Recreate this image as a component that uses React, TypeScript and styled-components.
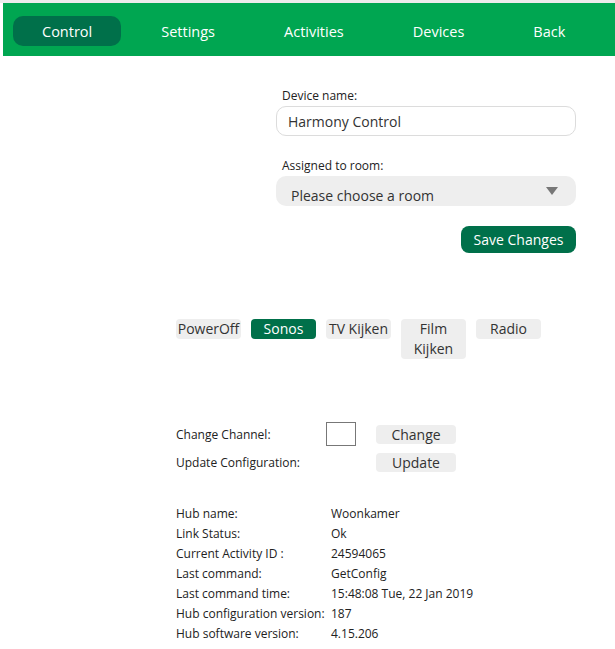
import styled, { createGlobalStyle } from 'styled-components'

const GlobalStyle = createGlobalStyle`
  html, body {
    margin: 0;
    padding: 0;
    background: #fff;
  }
  body {
    font-family: "Open Sans", "Noto Sans", sans-serif;
    color: #222;
    border-top: 3px solid #ececec;
  }
`

const green = '#00a651'
const darkGreen = '#00704a'

const Nav = styled.nav`
  display: flex;
  gap: 11px;
  margin-left: 3px;
  height: 53px;
  box-sizing: border-box;
  padding: 13px 10px 0;
  background: ${green};
`

const NavItem = styled.a<{ $active?: boolean }>`
  height: 30px;
  padding: 0 29px;
  border-radius: 10px;
  font-size: 14.5px;
  line-height: 31px;
  color: #fff;
  text-decoration: none;
  background: ${p => (p.$active ? darkGreen : 'transparent')};
  cursor: pointer;
`

const Content = styled.main`
  margin-left: 176px;
  width: 400px;
`

const Form = styled.form`
  margin-left: 100px;
  padding-top: 32px;
  display: flex;
  flex-direction: column;
`

const Label = styled.label<{ $top?: number }>`
  display: block;
  margin-top: ${p => p.$top ?? 0}px;
  margin-bottom: 2px;
  padding-left: 6px;
  font-size: 12px;
  line-height: 16px;
  color: #222;
`

const TextInput = styled.input`
  box-sizing: border-box;
  width: 300px;
  height: 30px;
  padding: 0 11px;
  border: 1px solid #dcdcdc;
  border-radius: 10px;
  font-family: inherit;
  font-size: 14px;
  color: #333;
  outline: none;
`

const Select = styled.div`
  position: relative;
  box-sizing: border-box;
  width: 300px;
  height: 30px;
  padding: 10px 15px 0;
  border-radius: 10px;
  background: #eeeeee;
  font-size: 14px;
  line-height: 20px;
  color: #333;
  overflow: hidden;
`

const Arrow = styled.span`
  position: absolute;
  right: 18px;
  top: 11px;
  width: 0;
  height: 0;
  border-left: 6px solid transparent;
  border-right: 6px solid transparent;
  border-top: 8px solid #777;
`

const SaveButton = styled.button`
  align-self: flex-end;
  margin-top: 20px;
  width: 115px;
  height: 27px;
  padding: 0;
  border: none;
  border-radius: 8px;
  background: ${darkGreen};
  color: #fff;
  font-family: inherit;
  font-size: 14px;
`

const Activities = styled.div`
  display: flex;
  align-items: flex-start;
  gap: 10px;
  margin-top: 66px;
`

const Activity = styled.button<{ $active?: boolean }>`
  width: 65px;
  padding: 0;
  border: none;
  border-radius: 4px;
  background: ${p => (p.$active ? darkGreen : '#eeeeee')};
  color: ${p => (p.$active ? '#fff' : '#333')};
  font-family: inherit;
  font-size: 14px;
  line-height: 20px;
`

const Controls = styled.div`
  display: flex;
  flex-direction: column;
  gap: 7px;
  margin-top: 63px;
`

const ControlRow = styled.div<{ $height: number }>`
  display: flex;
  align-items: center;
  height: ${p => p.$height}px;
  font-size: 12px;
`

const ControlLabel = styled.span`
  width: 150px;
`

const ChannelInput = styled.input`
  box-sizing: border-box;
  width: 30px;
  height: 24px;
  margin-right: 20px;
  border: 1px solid #777;
  padding: 0;
`

const SmallButton = styled.button<{ $offset?: number }>`
  width: 80px;
  height: 19px;
  margin-left: ${p => p.$offset ?? 0}px;
  padding: 0;
  border: none;
  border-radius: 4px;
  background: #eeeeee;
  color: #333;
  font-family: inherit;
  font-size: 14px;
  line-height: 19px;
`

const InfoTable = styled.dl`
  display: grid;
  grid-template-columns: 155px 1fr;
  grid-auto-rows: 20px;
  margin: 32px 0 0;
  font-size: 12px;
  line-height: 20px;
  color: #222;
  dt, dd {
    margin: 0;
  }
`

const navItems = ['Control', 'Settings', 'Activities', 'Devices', 'Back']
const activities = ['PowerOff', 'Sonos', 'TV Kijken', 'Film Kijken', 'Radio']
const info: [string, string][] = [
  ['Hub name:', 'Woonkamer'],
  ['Link Status:', 'Ok'],
  ['Current Activity ID :', '24594065'],
  ['Last command:', 'GetConfig'],
  ['Last command time:', '15:48:08 Tue, 22 Jan 2019'],
  ['Hub configuration version:', '187'],
  ['Hub software version:', '4.15.206'],
]

export default function App() {
  return (
    <>
      <GlobalStyle />
      <Nav>
        {navItems.map(item => (
          <NavItem key={item} $active={item === 'Control'}>
            {item}
          </NavItem>
        ))}
      </Nav>
      <Content>
        <Form onSubmit={e => e.preventDefault()}>
          <Label>Device name:</Label>
          <TextInput defaultValue="Harmony Control" />
          <Label $top={22}>Assigned to room:</Label>
          <Select>
            Please choose a room
            <Arrow />
          </Select>
          <SaveButton type="submit">Save Changes</SaveButton>
        </Form>

        <Activities>
          {activities.map(a => (
            <Activity key={a} $active={a === 'Sonos'}>
              {a}
            </Activity>
          ))}
        </Activities>

        <Controls>
          <ControlRow $height={24}>
            <ControlLabel>Change Channel:</ControlLabel>
            <ChannelInput />
            <SmallButton>Change</SmallButton>
          </ControlRow>
          <ControlRow $height={19}>
            <ControlLabel>Update Configuration:</ControlLabel>
            <SmallButton $offset={50}>Update</SmallButton>
          </ControlRow>
        </Controls>

        <InfoTable>
          {info.map(([k, v]) => (
            <>
              <dt key={k}>{k}</dt>
              <dd key={k + 'v'}>{v}</dd>
            </>
          ))}
        </InfoTable>
      </Content>
    </>
  )
}
